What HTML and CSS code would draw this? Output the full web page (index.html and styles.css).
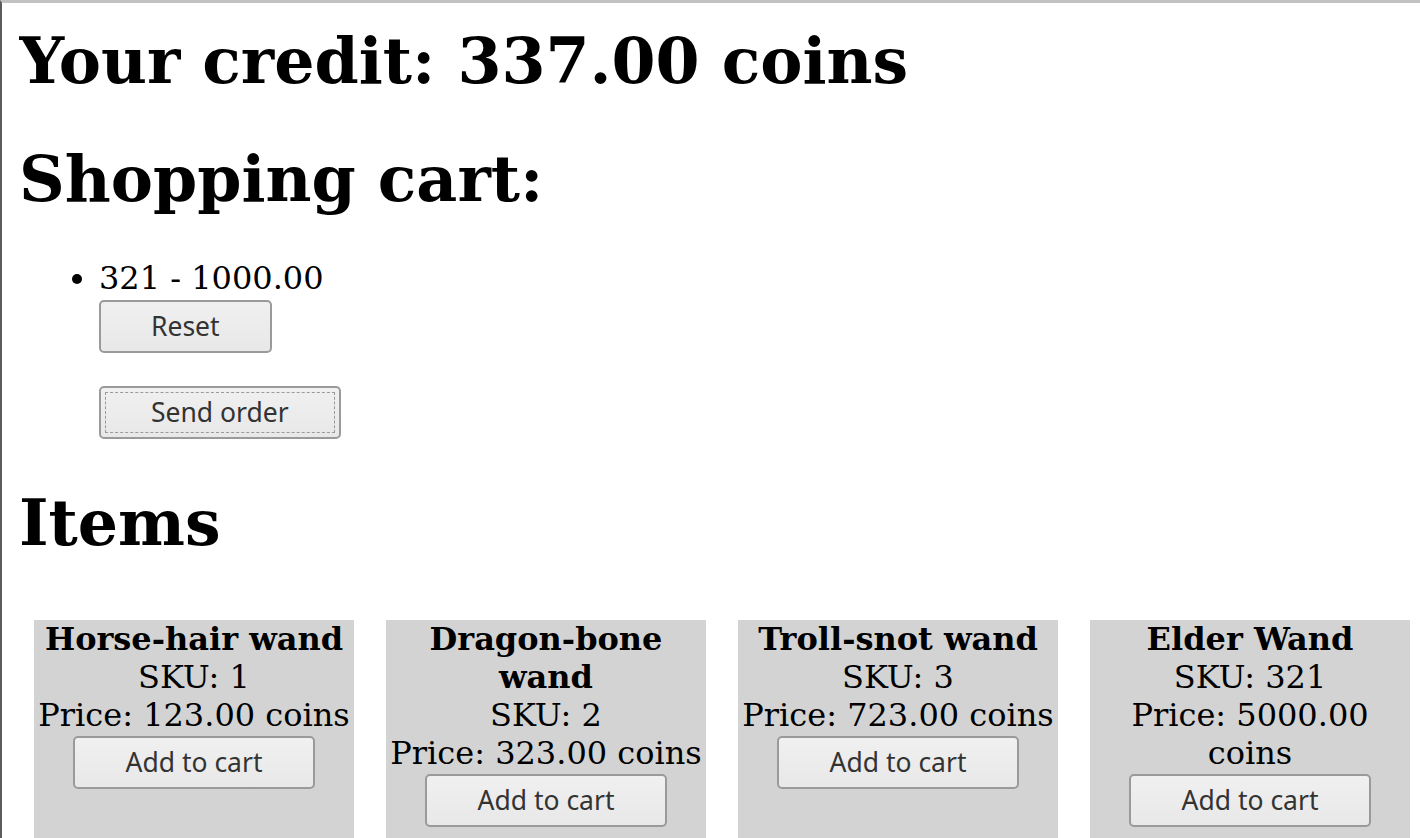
FILE: index.html
```html
<!DOCTYPE html>
<html>
<head>
<meta charset="utf-8">
<title>Shop</title>
<link rel="stylesheet" href="styles.css">
</head>
<body>
<h1 class="heading heading-first">Your credit: 337.00 coins</h1>
<h1 class="heading">Shopping cart:</h1>
<ul class="cart">
  <li class="cart-item">
    <div class="cart-line">321 - 1000.00</div>
    <button class="btn btn-reset">Reset</button>
    <button class="btn btn-send">Send order</button>
  </li>
</ul>
<h1 class="heading heading-items">Items</h1>
<div class="items">
  <div class="card">
    <div class="card-title">Horse-hair wand</div>
    <div>SKU: 1</div>
    <div>Price: 123.00 coins</div>
    <button class="btn btn-add">Add to cart</button>
  </div>
  <div class="card">
    <div class="card-title">Dragon-bone wand</div>
    <div>SKU: 2</div>
    <div>Price: 323.00 coins</div>
    <button class="btn btn-add">Add to cart</button>
  </div>
  <div class="card">
    <div class="card-title">Troll-snot wand</div>
    <div>SKU: 3</div>
    <div>Price: 723.00 coins</div>
    <button class="btn btn-add">Add to cart</button>
  </div>
  <div class="card">
    <div class="card-title">Elder Wand</div>
    <div>SKU: 321</div>
    <div>Price: 5000.00 coins</div>
    <button class="btn btn-add">Add to cart</button>
  </div>
</div>
</body>
</html>
```
FILE: styles.css
```css
html {
  border-top: 3px solid #c2c2c2;
  border-left: 2px solid #5c5c5c;
  background: #ffffff;
  overflow: hidden;
}

body {
  margin: 0 0 0 17px;
  padding: 0;
  font-family: "DejaVu Serif", serif;
  font-size: 32px;
  line-height: normal;
  color: #000000;
}

.heading {
  font-size: 63.3px;
  font-weight: bold;
  line-height: 74.5px;
  margin: 43px 0;
}

.heading-first {
  margin-top: 21px;
}

.heading-items {
  margin-top: 47px;
}

.cart {
  margin: 43px 0 47px 0;
  padding-left: 80px;
  list-style: disc;
}

.cart-item {
  display: list-item;
}

.btn {
  display: block;
  font-family: "Noto Sans", "DejaVu Sans", sans-serif;
  font-size: 26.5px;
  line-height: 37px;
  color: #333333;
  background: linear-gradient(#f0f0f0, #e8e8e8);
  border: 2px solid #9a9a9a;
  border-radius: 5px;
  padding: 6px 50px;
  margin: 0;
  cursor: pointer;
}

.btn-reset {
  margin-top: 3px;
}

.btn-send {
  margin-top: 33px;
  outline: 1px dashed #9a9a9a;
  outline-offset: -7px;
}

.items {
  display: flex;
  gap: 32px;
  padding-left: 15px;
  margin-top: 59px;
}

.card {
  flex: 0 0 320px;
  width: 320px;
  min-height: 260px;
  background: #d3d3d3;
  text-align: center;
  display: flex;
  flex-direction: column;
  align-items: center;
}

.card-title {
  font-weight: bold;
}

.btn-add {
  margin-top: 2px;
}
```
